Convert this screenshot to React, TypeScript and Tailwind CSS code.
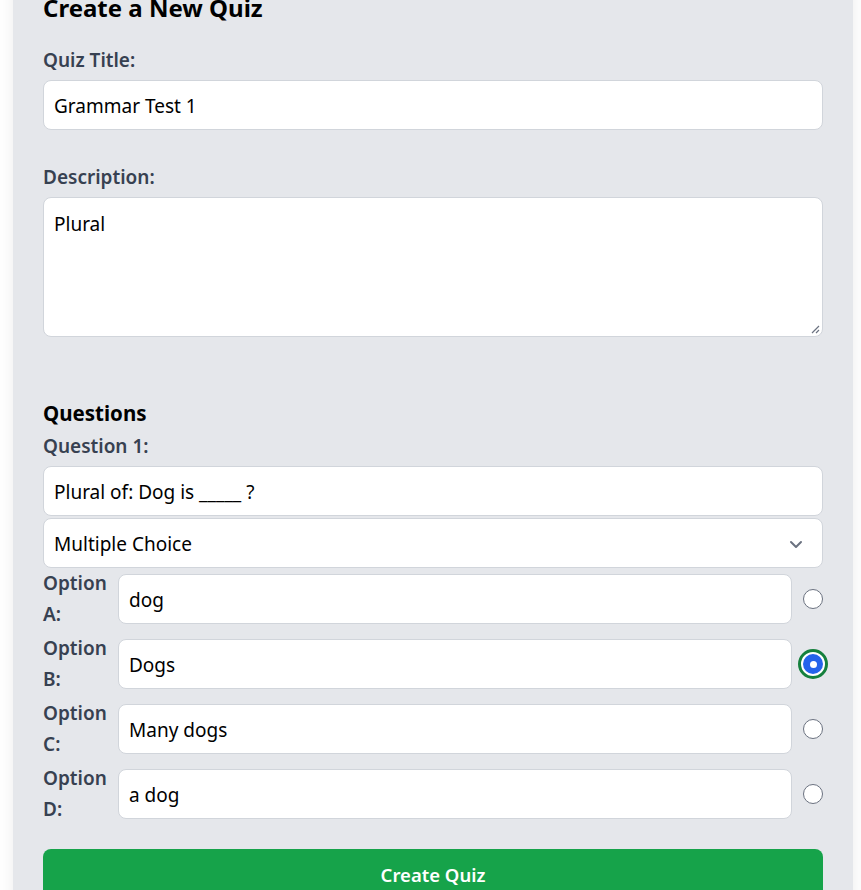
import React from "react";

const font = { fontFamily: '"Noto Sans", "Open Sans", sans-serif' };

function Radio({ checked }: { checked?: boolean }) {
  if (checked) {
    return (
      <div className="ml-[6px] -mr-[5px] flex h-[30px] w-[30px] shrink-0 items-center justify-center rounded-full border-[3px] border-[#15803d] bg-white">
        <div className="flex h-[20px] w-[20px] items-center justify-center rounded-full bg-[#2563eb]">
          <div className="h-[7px] w-[7px] rounded-full bg-white" />
        </div>
      </div>
    );
  }
  return (
    <div className="ml-[11px] h-[20px] w-[20px] shrink-0 rounded-full border border-[#6b7280] bg-white" />
  );
}

function OptionRow({ letter, value, checked }: { letter: string; value: string; checked?: boolean }) {
  return (
    <div className="mb-[3px] flex items-center">
      <div className="w-[62px] shrink-0 text-[19px] font-semibold leading-[31px] text-[#374151]">
        Option
        <br />
        {letter}:
      </div>
      <div className="ml-[13px] flex h-[50px] flex-1 items-center rounded-lg border border-[#d1d5db] bg-white px-[10px] pt-[2px] text-[19px] text-black">
        {value}
      </div>
      <Radio checked={checked} />
    </div>
  );
}

export default function App() {
  return (
    <div className="h-[890px] w-full overflow-hidden bg-white" style={font}>
      <div className="ml-[13px] -mt-[38px] w-[840px] bg-[#e5e7eb] px-[30px] pt-[30px] pb-[40px] shadow-[0_0_15px_rgba(0,0,0,0.08)]">
        <h2 className="mb-[22px] text-[24px] font-bold leading-[32px] text-black">Create a New Quiz</h2>

        <div className="mb-[33px]">
          <div className="mb-[6px] text-[19px] font-semibold leading-[28px] text-[#374151]">Quiz Title:</div>
          <div className="flex h-[50px] items-center rounded-lg border border-[#d1d5db] bg-white px-[10px] pt-[2px] text-[19px] text-black">
            Grammar Test 1
          </div>
        </div>

        <div className="mb-[61px]">
          <div className="mb-[6px] text-[19px] font-semibold leading-[28px] text-[#374151]">Description:</div>
          <div className="relative h-[140px] rounded-lg border border-[#d1d5db] bg-white px-[10px] pt-[12px] text-[19px] leading-[28px] text-black">
            Plural
            <svg className="absolute bottom-[2px] right-[2px]" width="10" height="10" viewBox="0 0 10 10">
              <path d="M9 2 L2 9 M9 6 L6 9" stroke="#6b7280" strokeWidth="1.2" />
            </svg>
          </div>
        </div>

        <h3 className="mb-[4px] text-[20.5px] font-bold leading-[30px] text-black">Questions</h3>
        <div className="mb-[6px] text-[19px] font-semibold leading-[28px] text-[#374151]">Question 1:</div>
        <div className="mb-[2px] flex h-[50px] items-center rounded-lg border border-[#d1d5db] bg-white px-[10px] pt-[2px] text-[19px] text-black">
          Plural of: Dog is _____ ?
        </div>
        <div className="flex h-[50px] items-center justify-between rounded-lg border border-[#d1d5db] bg-white pl-[10px] pr-[18px] pt-[2px] text-[19px] text-black">
          <span>Multiple Choice</span>
          <svg width="16" height="16" viewBox="0 0 16 16" fill="none">
            <path d="M3 6 L8 11 L13 6" stroke="#6b7280" strokeWidth="2" strokeLinecap="round" strokeLinejoin="round" />
          </svg>
        </div>

        <OptionRow letter="A" value="dog" />
        <OptionRow letter="B" value="Dogs" checked />
        <OptionRow letter="C" value="Many dogs" />
        <OptionRow letter="D" value="a dog" />

        <button className="mt-[24px] flex h-[52px] w-full items-center justify-center rounded-lg bg-[#16a34a] text-[18.5px] font-semibold text-white">
          Create Quiz
        </button>
      </div>
    </div>
  );
}
